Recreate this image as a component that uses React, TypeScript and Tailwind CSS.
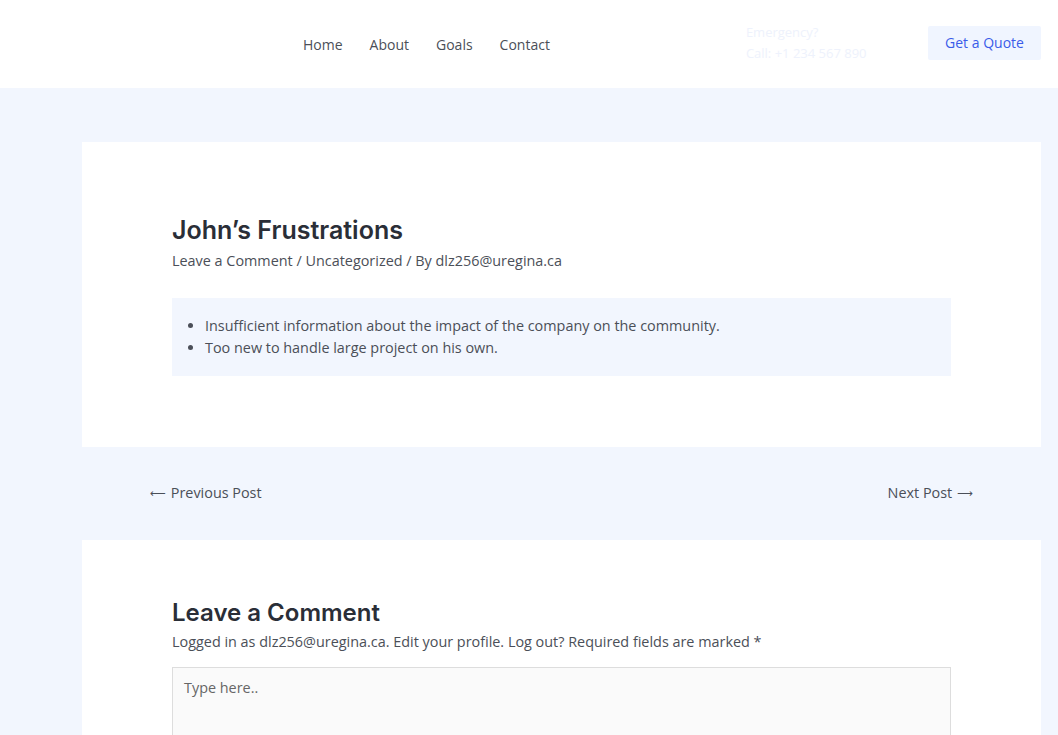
export default function App() {
  const body = { fontFamily: '"Open Sans", "Liberation Sans", sans-serif' };
  const head = { fontFamily: 'Inter, "Open Sans", sans-serif' };
  const arrow = { fontFamily: '"DejaVu Sans", sans-serif' };
  return (
    <div className="h-[735px] overflow-hidden bg-[#f2f6fe] text-[#4b4f58]" style={body}>
      <header className="h-[88px] bg-white flex items-center">
        <nav className="ml-[303px] flex gap-[27px] text-[14px] text-[#4b4f58]">
          <span>Home</span>
          <span>About</span>
          <span>Goals</span>
          <span>Contact</span>
        </nav>
        <div className="ml-[196px] flex flex-col gap-[4px] text-[13px] text-[#eef2fc] leading-[17px] mt-[-3px]">
          <span>Emergency?</span>
          <span>Call: +1 234 567 890</span>
        </div>
        <div className="ml-auto mr-[17px] mt-[-3px] h-[34px] w-[113px] justify-center flex items-center rounded-[2px] bg-[#f0f5ff] text-[#3a5ce9] text-[14px]">
          Get a Quote
        </div>
      </header>
      <main className="pt-[54px] pl-[82px] pr-[17px]">
        <article className="bg-white pt-[70px] pb-[71px] px-[90px]">
          <h1 className="text-[25px] font-semibold text-[#2a2e37] leading-[36px]" style={head}>
            John’s Frustrations
          </h1>
          <div className="mt-[2px] text-[14.4px] leading-[22px]">
            Leave a Comment / Uncategorized / By dlz256@uregina.ca
          </div>
          <div className="mt-[26px] bg-[#f2f6fe] pt-[17px] pb-[17px] pl-[33px]">
            <ul className="list-disc text-[14.4px] leading-[22px] marker:text-[#4b4f58]">
              <li>Insufficient information about the impact of the company on the community.</li>
              <li>Too new to handle large project on his own.</li>
            </ul>
          </div>
        </article>
        <div className="h-[93px] flex items-center justify-between pl-[68px] pr-[68px] pb-[2px] text-[14.4px]">
          <span className="flex items-center gap-[5px]">
            <span style={arrow} className="text-[11px] mt-[3px]">⟵</span>
            <span>Previous Post</span>
          </span>
          <span className="flex items-center gap-[5px]">
            <span>Next Post</span>
            <span style={arrow} className="text-[11px] mt-[3px]">⟶</span>
          </span>
        </div>
        <section className="bg-white pt-[57px] px-[90px] h-[200px]">
          <h2 className="text-[24px] font-semibold text-[#2a2e37] leading-[32px]" style={head}>
            Leave a Comment
          </h2>
          <div className="mt-[2px] text-[14.4px] leading-[22px]">
            Logged in as dlz256@uregina.ca. Edit your profile. Log out? Required fields are marked *
          </div>
          <div className="mt-[14px] h-[120px] border border-[#dddddd] bg-[#fafafa] px-[11px] pt-[9px] text-[14.4px] text-[#666]">
            Type here..
          </div>
        </section>
      </main>
    </div>
  );
}
